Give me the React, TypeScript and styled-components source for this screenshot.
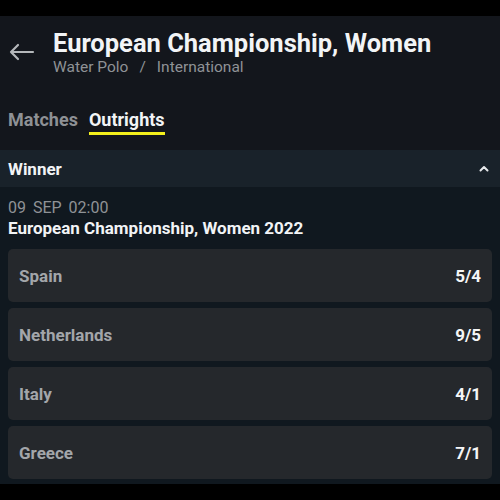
import React from "react";
import styled, { createGlobalStyle } from "styled-components";

const GlobalStyle = createGlobalStyle`
  html, body {
    margin: 0;
    padding: 0;
    background: #000;
  }
  body {
    font-family: Roboto, "Noto Sans", sans-serif;
  }
`;

const Page = styled.div`
  width: 500px;
  height: 500px;
  background: #000;
  padding-top: 16px;
  box-sizing: border-box;
`;

const Screen = styled.div`
  background: #13161c;
`;

const Header = styled.header`
  display: flex;
  align-items: flex-start;
  padding: 12px 0 0 8px;
  height: 82px;
  box-sizing: border-box;
`;

const BackButton = styled.button`
  background: none;
  border: none;
  padding: 0;
  margin: 14px 18px 0 0;
  width: 27px;
  height: 20px;
  color: #b4b7ba;
  cursor: pointer;
  display: flex;
`;

const TitleBlock = styled.div`
  display: flex;
  flex-direction: column;
`;

const Title = styled.h1`
  margin: 0;
  font-size: 25.5px;
  line-height: 30px;
  font-weight: 700;
  color: #f2f4f6;
`;

const Breadcrumb = styled.div`
  font-size: 15.5px;
  line-height: 18px;
  color: #8f9296;
  display: flex;
  gap: 11px;
`;

const Tabs = styled.nav`
  display: flex;
  gap: 11px;
  padding: 12px 8px 0;
  height: 52px;
  align-items: flex-start;
  box-sizing: border-box;
`;

const Tab = styled.span<{ $active?: boolean }>`
  font-size: 18px;
  line-height: 20px;
  font-weight: 700;
  color: ${(p) => (p.$active ? "#f2f4f6" : "#8e9195")};
  padding-bottom: 2px;
  border-bottom: 3px solid ${(p) => (p.$active ? "#f4f01c" : "transparent")};
`;

const Market = styled.section`
  background: #10181f;
  padding-bottom: 5px;
`;

const MarketHeader = styled.div`
  display: flex;
  align-items: center;
  justify-content: space-between;
  height: 37px;
  padding: 0 11px 0 8px;
  background: #19222a;
  font-size: 17px;
  font-weight: 700;
  color: #f2f4f6;
`;

const EventInfo = styled.div`
  padding: 11px 8px 10px;
`;

const EventTime = styled.div`
  font-size: 16px;
  line-height: 20px;
  color: #8f9296;
  word-spacing: 3px;
`;

const EventName = styled.div`
  font-size: 17px;
  line-height: 21px;
  font-weight: 700;
  color: #f2f4f6;
`;

const Selections = styled.div`
  display: flex;
  flex-direction: column;
  gap: 6px;
  padding: 0 8px;
`;

const Selection = styled.div`
  display: flex;
  align-items: center;
  justify-content: space-between;
  height: 53px;
  padding: 0 11px;
  border-radius: 5px;
  background: #25282c;
`;

const Runner = styled.span`
  font-size: 17px;
  font-weight: 700;
  color: #a3a6aa;
`;

const Price = styled.span`
  font-size: 17px;
  font-weight: 700;
  color: #f5f6f7;
`;

const selections = [
  { name: "Spain", price: "5/4" },
  { name: "Netherlands", price: "9/5" },
  { name: "Italy", price: "4/1" },
  { name: "Greece", price: "7/1" },
];

const App: React.FC = () => {
  return (
    <Page>
      <GlobalStyle />
      <Screen>
        <Header>
          <BackButton aria-label="Back">
            <svg width="27" height="20" viewBox="0 0 27 20" fill="none">
              <path
                d="M25 10H3M10 3L3 10l7 7"
                stroke="currentColor"
                strokeWidth="2.2"
                strokeLinecap="round"
                strokeLinejoin="round"
              />
            </svg>
          </BackButton>
          <TitleBlock>
            <Title>European Championship, Women</Title>
            <Breadcrumb>
              <span>Water Polo</span>
              <span>/</span>
              <span>International</span>
            </Breadcrumb>
          </TitleBlock>
        </Header>
        <Tabs>
          <Tab>Matches</Tab>
          <Tab $active>Outrights</Tab>
        </Tabs>
        <Market>
          <MarketHeader>
            <span>Winner</span>
            <svg width="10" height="7" viewBox="0 0 10 7" fill="none">
              <path
                d="M1.5 5.5L5 2l3.5 3.5"
                stroke="#e6e8ea"
                strokeWidth="2"
                strokeLinecap="round"
                strokeLinejoin="round"
              />
            </svg>
          </MarketHeader>
          <EventInfo>
            <EventTime>09 SEP 02:00</EventTime>
            <EventName>European Championship, Women 2022</EventName>
          </EventInfo>
          <Selections>
            {selections.map((s) => (
              <Selection key={s.name}>
                <Runner>{s.name}</Runner>
                <Price>{s.price}</Price>
              </Selection>
            ))}
          </Selections>
        </Market>
      </Screen>
    </Page>
  );
};

export default App;
